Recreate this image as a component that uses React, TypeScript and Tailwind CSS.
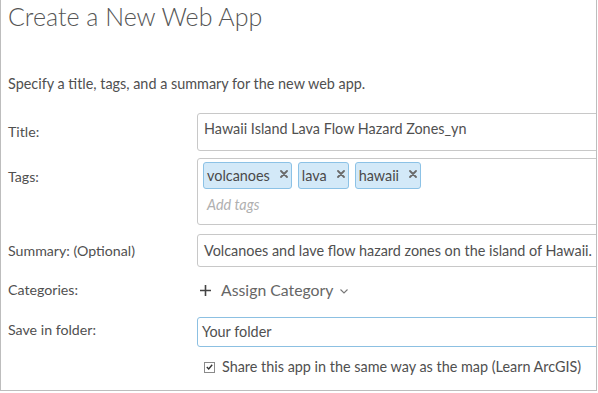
import React from "react";

const font = { fontFamily: "Lato, 'Noto Sans', sans-serif" };

function Chip({ label }: { label: string }) {
  return (
    <div className="flex h-[27px] items-center rounded-[3px] border border-[#8cc2e6] bg-[#d3e9f8] pl-[3px] pr-[3px] text-[14.4px] leading-[18px] text-[#4a4a4a]">
      <span>{label}</span>
      <svg width="8" height="8" viewBox="0 0 8 8" className="mb-[4px] ml-[10px]">
        <path d="M1 1 L7 7 M7 1 L1 7" stroke="#6a6a6a" strokeWidth="1.8" strokeLinecap="round" />
      </svg>
    </div>
  );
}

export default function App() {
  return (
    <div
      className="h-[391px] w-[597px] overflow-hidden border-x border-b border-[#bdbdbd] bg-white text-[#505050]"
      style={font}
    >
      <div className="h-[32px] pl-[7px] text-[25px] font-light leading-[32px] text-[#555]">Create a New Web App</div>
      <div className="mt-[44px] h-[16px] pl-[7px] text-[14.4px] leading-[16px]">
        Specify a title, tags, and a summary for the new web app.
      </div>

      <div className="mt-[21px] flex h-[38px] items-center">
        <div className="w-[196px] shrink-0 pl-[7px] text-[14.2px]">Title:</div>
        <div className="h-[38px] w-[420px] shrink-0 rounded-[3px] border border-[#c8c8c8] pl-[6px] pt-[6px] text-[14.4px] leading-[18px]">
          Hawaii Island Lava Flow Hazard Zones_yn
        </div>
      </div>

      <div className="mt-[7px] flex items-start">
        <div className="w-[196px] shrink-0 pl-[7px] pt-[11px] text-[14.2px] leading-[16px]">Tags:</div>
        <div className="h-[67px] w-[420px] shrink-0 rounded-[3px] border border-[#c8c8c8] pl-[5px] pt-[3px]">
          <div className="flex gap-[6px]">
            <Chip label="volcanoes" />
            <Chip label="lava" />
            <Chip label="hawaii" />
          </div>
          <div className="mt-[7px] pl-[4px] text-[14.4px] italic leading-[18px] text-[#b0b0b0]">Add tags</div>
        </div>
      </div>

      <div className="mt-[9px] flex h-[33px] items-center">
        <div className="w-[196px] shrink-0 pl-[7px] text-[14.2px]">Summary: (Optional)</div>
        <div className="flex h-[33px] w-[420px] shrink-0 items-center rounded-[3px] border border-[#c8c8c8] pl-[6px] text-[14.4px]">
          <span className="whitespace-nowrap">Volcanoes and lave flow hazard zones on the island of Hawaii.</span>
        </div>
      </div>

      <div className="mt-[13px] flex h-[20px] items-center">
        <div className="w-[196px] shrink-0 pl-[7px] text-[14.2px]">Categories:</div>
        <div className="flex items-center pl-[3px] text-[15.8px] leading-[20px] text-[#666]">
          <svg width="11" height="11" viewBox="0 0 11 11" className="mr-[10px]">
            <path d="M5.5 0 V11 M0 5.5 H11" stroke="#444" strokeWidth="1.6" />
          </svg>
          <span>Assign Category</span>
          <svg width="8" height="5" viewBox="0 0 8 5" className="ml-[7px] mt-[3px]">
            <path d="M0.5 0.5 L4 4 L7.5 0.5" fill="none" stroke="#777" strokeWidth="1.1" />
          </svg>
        </div>
      </div>

      <div className="mt-[17px] flex h-[30px] items-center">
        <div className="mb-[4px] w-[196px] shrink-0 pl-[7px] text-[14.2px]">Save in folder:</div>
        <div className="flex h-[30px] w-[420px] shrink-0 items-center rounded-l-[3px] border border-[#8cc0e2] pl-[4px] text-[14.4px]">
          Your folder
        </div>
      </div>

      <div className="mt-[13px] flex h-[14px] items-center pl-[203px]">
        <div className="flex h-[11px] w-[11px] shrink-0 items-center justify-center border border-[#8a8a8a] bg-white">
          <svg width="7" height="6" viewBox="0 0 7 6">
            <path d="M0.8 3 L2.7 4.9 L6.2 0.8" fill="none" stroke="#333" strokeWidth="1.4" />
          </svg>
        </div>
        <span className="ml-[7px] whitespace-nowrap text-[14.4px]">Share this app in the same way as the map (Learn ArcGIS)</span>
      </div>
    </div>
  );
}
